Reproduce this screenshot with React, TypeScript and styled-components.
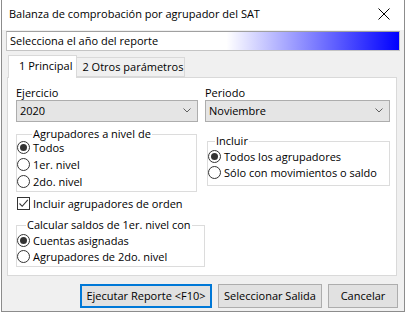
import React from "react";
import styled, { createGlobalStyle } from "styled-components";

// --- Global ---
const GlobalStyle = createGlobalStyle`
  body {
    margin: 0;
    background: #ffffff;
    font-family: "Open Sans", "Noto Sans", sans-serif;
    font-size: 11px;
    line-height: 15px;
    color: #000000;
  }
  * { box-sizing: border-box; }
`;

// --- Window frame ---
const Window = styled.div`
  width: 404px;
  height: 312px;
  margin-left: 1px;
  border: 1px solid #8c8c8c;
  border-top: none;
  background: #f0f0f0;
  display: flex;
  flex-direction: column;
`;

const TitleBar = styled.div`
  height: 30px;
  background: #ffffff;
  display: flex;
  align-items: center;
  justify-content: space-between;
  padding: 0 14px 3px 7px;
`;

const Client = styled.div`
  flex: 1;
  display: flex;
  flex-direction: column;
  padding: 1px 4px 0 4px;
`;

const Header = styled.div`
  height: 20px;
  border: 1px solid #c4c4c4;
  border-top-color: #a0a0a0;
  background: linear-gradient(to right, #ffffff 0%, #ffffff 56%, #0000ff 100%);
  display: flex;
  align-items: center;
  padding: 0 0 1px 3px;
`;

// --- Tabs ---
const TabStrip = styled.div`
  display: flex;
  align-items: flex-end;
  margin: 5px 0 0 2px;
  height: 21px;
`;

const Tab = styled.div<{ $active?: boolean }>`
  position: relative;
  z-index: ${(p) => (p.$active ? 2 : 1)};
  height: ${(p) => (p.$active ? "23px" : "20px")};
  margin-bottom: ${(p) => (p.$active ? "-1px" : "0")};
  padding: ${(p) => (p.$active ? "2px 4px 0 10px" : "1px 1px 0 5px")};
  background: ${(p) => (p.$active ? "#ffffff" : "#f0f0f0")};
  border: 1px solid #d9d9d9;
  border-bottom: ${(p) => (p.$active ? "none" : "1px solid #d9d9d9")};
  border-left: ${(p) => (p.$active ? "1px solid #d9d9d9" : "none")};
  white-space: nowrap;
`;

const Panel = styled.div`
  margin-left: 1px;
  width: 390px;
  height: 199px;
  background: #ffffff;
  border: 1px solid #d9d9d9;
  padding: 7px 6px 0 8px;
`;

const ComboRow = styled.div`
  display: grid;
  grid-template-columns: 182px 185px;
  column-gap: 7px;
`;

const Field = styled.div`
  display: flex;
  flex-direction: column;
`;

const Label = styled.div`
  height: 15px;
`;

const Combo = styled.div`
  height: 22px;
  background: #e5e5e5;
  border: 1px solid #adadad;
  display: flex;
  align-items: center;
  justify-content: space-between;
  padding: 0 6px 1px 3px;
`;

const Columns = styled.div`
  display: flex;
  margin-top: 6px;
`;

const LeftCol = styled.div`
  width: 189px;
  display: flex;
  flex-direction: column;
`;

const RightCol = styled.div`
  width: 183px;
  margin: 7px 0 0 2px;
`;

// --- Group boxes ---
const Group = styled.fieldset<{ $width: number; $pb?: number }>`
  width: ${(p) => p.$width}px;
  margin: 0;
  padding: 0 0 ${(p) => p.$pb ?? 0}px 0;
  border: 1px solid #dcdcdc;
  min-width: 0;
`;

const Legend = styled.legend<{ $offset: number }>`
  margin-left: ${(p) => p.$offset}px;
  padding: 0 1px;
  line-height: 12px;
  height: 12px;
`;

const Option = styled.div<{ $h?: number }>`
  height: ${(p) => p.$h ?? 16}px;
  display: flex;
  align-items: center;
  gap: 3px;
  white-space: nowrap;
`;

const OptionList = styled.div<{ $mt?: number }>`
  margin-top: ${(p) => p.$mt ?? 0}px;
`;

const RadioMark = styled.span<{ $checked?: boolean }>`
  width: 13px;
  height: 13px;
  border-radius: 50%;
  border: 1px solid #333333;
  background: #ffffff;
  display: inline-flex;
  align-items: center;
  justify-content: center;
  flex-shrink: 0;

  &::after {
    content: "";
    width: 7px;
    height: 7px;
    border-radius: 50%;
    background: ${(p) => (p.$checked ? "#333333" : "transparent")};
  }
`;

const CheckMark = styled.span`
  width: 13px;
  height: 13px;
  border: 1px solid #333333;
  background: #ffffff;
  display: inline-flex;
  align-items: center;
  justify-content: center;
  flex-shrink: 0;
`;

const CheckRow = styled(Option)`
  height: 17px;
  margin: 3px 0 7px 1px;
`;

// --- Buttons ---
const ButtonBar = styled.div`
  display: flex;
  justify-content: flex-end;
  gap: 6px;
  margin: 8px 2px 0 0;
`;

const Button = styled.div<{ $width: number; $default?: boolean }>`
  width: ${(p) => p.$width}px;
  height: 24px;
  background: #e1e1e1;
  border: ${(p) => (p.$default ? "2px solid #0078d7" : "1px solid #adadad")};
  display: flex;
  align-items: center;
  justify-content: center;
  padding-bottom: 1px;
`;

const Chevron = () => (
  <svg width="8" height="5" viewBox="0 0 8 5">
    <path d="M0.5 0.5 L4 4 L7.5 0.5" fill="none" stroke="#606060" strokeWidth="1" />
  </svg>
);

const CloseIcon = () => (
  <svg width="12" height="12" viewBox="0 0 12 12">
    <path d="M0.5 0.5 L11.5 11.5 M11.5 0.5 L0.5 11.5" stroke="#000" strokeWidth="1" />
  </svg>
);

const Radio = ({ checked, children, $h }: { checked?: boolean; children: React.ReactNode; $h?: number }) => (
  <Option $h={$h}>
    <RadioMark $checked={checked} />
    {children}
  </Option>
);

export default function App() {
  return (
    <>
      <GlobalStyle />
      <Window>
        <TitleBar>
          <span>Balanza de comprobación por agrupador del SAT</span>
          <CloseIcon />
        </TitleBar>
        <Client>
          <Header>Selecciona el año del reporte</Header>
          <TabStrip>
            <Tab $active>1 Principal</Tab>
            <Tab>2 Otros parámetros</Tab>
          </TabStrip>
          <Panel>
            <ComboRow>
              <Field>
                <Label>Ejercicio</Label>
                <Combo>
                  <span>2020</span>
                  <Chevron />
                </Combo>
              </Field>
              <Field>
                <Label>Periodo</Label>
                <Combo>
                  <span>Noviembre</span>
                  <Chevron />
                </Combo>
              </Field>
            </ComboRow>
            <Columns>
              <LeftCol>
                <Group $width={181} $pb={1}>
                  <Legend $offset={15}>Agrupadores a nivel de</Legend>
                  <OptionList $mt={-1}>
                    <Radio checked $h={17}>Todos</Radio>
                    <Radio $h={17}>1er. nivel</Radio>
                    <Radio $h={17}>2do. nivel</Radio>
                  </OptionList>
                </Group>
                <CheckRow>
                  <CheckMark>
                    <svg width="11" height="11" viewBox="0 0 11 11">
                      <path d="M1.5 5.5 L4.2 8.3 L9.8 1.8" fill="none" stroke="#333" strokeWidth="1.1" />
                    </svg>
                  </CheckMark>
                  Incluir agrupadores de orden
                </CheckRow>
                <Group $width={189} $pb={2}>
                  <Legend $offset={9}>Calcular saldos de 1er. nivel con</Legend>
                  <OptionList $mt={1}>
                    <Radio checked>Cuentas asignadas</Radio>
                    <Radio>Agrupadores de 2do. nivel</Radio>
                  </OptionList>
                </Group>
              </LeftCol>
              <RightCol>
                <Group $width={183} $pb={5}>
                  <Legend $offset={7}>Incluir</Legend>
                  <OptionList $mt={1}>
                    <Radio checked>Todos los agrupadores</Radio>
                    <Radio>Sólo con movimientos o saldo</Radio>
                  </OptionList>
                </Group>
              </RightCol>
            </Columns>
          </Panel>
          <ButtonBar>
            <Button $width={132} $default>Ejecutar Reporte &lt;F10&gt;</Button>
            <Button $width={104}>Seleccionar Salida</Button>
            <Button $width={70}>Cancelar</Button>
          </ButtonBar>
        </Client>
      </Window>
    </>
  );
}
